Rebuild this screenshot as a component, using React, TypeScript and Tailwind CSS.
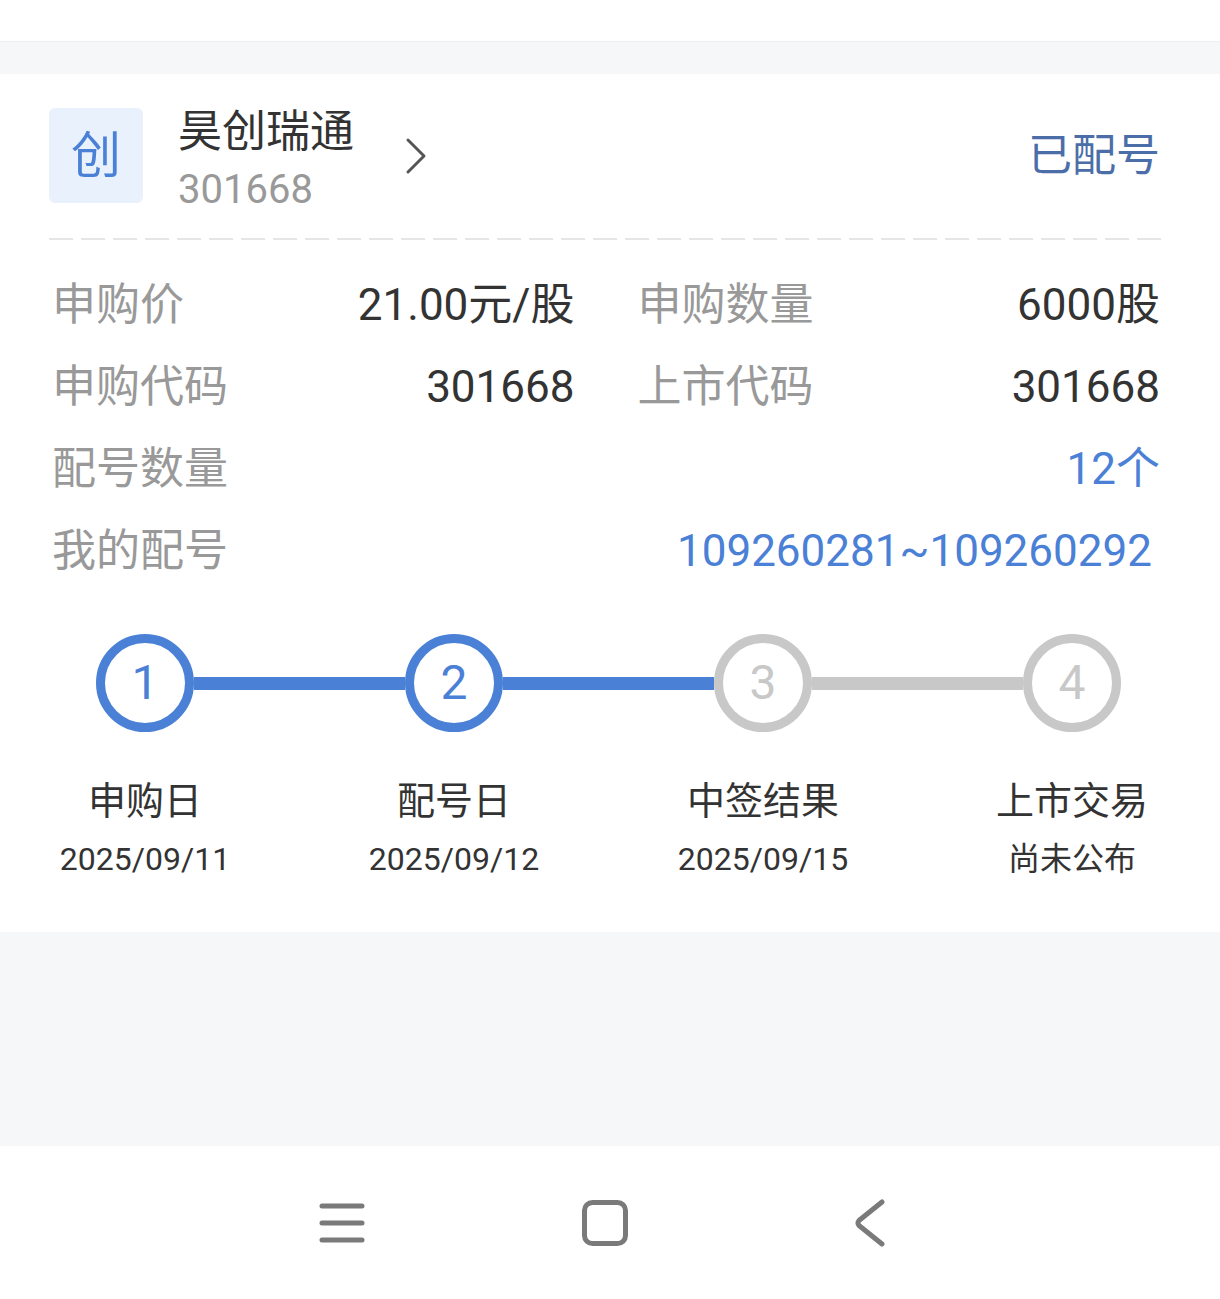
import React from 'react'

const FONT = { fontFamily: 'Roboto, "Noto Sans CJK SC", sans-serif' }

const BLUE = '#4a80d6'

const INFO_PAIRS = [
  [
    { label: '申购价', value: '21.00元/股' },
    { label: '申购数量', value: '6000股' },
  ],
  [
    { label: '申购代码', value: '301668' },
    { label: '上市代码', value: '301668' },
  ],
]

const STEPS = [
  { n: 1, title: '申购日', date: '2025/09/11', done: true },
  { n: 2, title: '配号日', date: '2025/09/12', done: true },
  { n: 3, title: '中签结果', date: '2025/09/15', done: false },
  { n: 4, title: '上市交易', date: '尚未公布', done: false },
]

const Chevron = () => (
  <svg width="24" height="38" viewBox="0 0 24 38" fill="none">
    <path d="M4 3 L20 19 L4 35" stroke="#555" strokeWidth="3" strokeLinecap="round" strokeLinejoin="round" />
  </svg>
)

const NavMenu = () => (
  <svg width="48" height="44" viewBox="0 0 48 44" fill="none">
    <path d="M4 5 H44 M4 22 H44 M4 39 H44" stroke="#7a7a7a" strokeWidth="5" strokeLinecap="round" />
  </svg>
)

const NavHome = () => (
  <svg width="48" height="48" viewBox="0 0 48 48" fill="none">
    <rect x="3.5" y="3.5" width="41" height="41" rx="8" stroke="#7a7a7a" strokeWidth="5" />
  </svg>
)

const NavBack = () => (
  <svg width="34" height="48" viewBox="0 0 34 48" fill="none">
    <path d="M29 3 L6 21.5 Q4 24 6 26.5 L29 45" stroke="#7a7a7a" strokeWidth="5" strokeLinecap="round" strokeLinejoin="round" />
  </svg>
)

export default function App() {
  return (
    <div className="w-[1220px] h-[1299px] flex flex-col bg-[#f6f7f9]" style={FONT}>

      {/* top bar */}
      <div className="h-[42px] bg-white border-b border-[#eeeff1]" />
      <div className="h-[32px]" />

      {/* card */}
      <div className="bg-white pt-[34px] h-[858px]">

        {/* header */}
        <div className="h-[95px] flex items-center pl-[49px] pr-[60px]">
          <div className="w-[94px] h-[95px] rounded-[6px] bg-[#e9f1fc] flex items-center justify-center text-[50px] leading-none" style={{ color: BLUE }}>
            创
          </div>
          <div className="ml-[35px] flex flex-col self-start -mt-[1px]">
            <span className="text-[44px] leading-[50px] text-[#333]">昊创瑞通</span>
            <span className="mt-[8px] text-[40px] leading-[50px] text-[#999]">301668</span>
          </div>
          <div className="ml-[50px]">
            <Chevron />
          </div>
          <span className="ml-auto text-[44px] leading-none text-[#4b6ea8]">已配号</span>
        </div>

        {/* dashed divider */}
        <div className="mt-[35px] ml-[49px] mr-[57px] h-[2px] bg-[repeating-linear-gradient(to_right,#e6e6e6_0_24px,transparent_24px_32px)]" />

        {/* info */}
        <div className="mt-[24px] pl-[52px] pr-[60px] flex flex-col">
          {INFO_PAIRS.map((pair, i) => (
            <div key={i} className="grid grid-cols-2 gap-x-[63px] h-[82px] items-center">
              {pair.map((cell) => (
                <div key={cell.label} className="flex items-center justify-between">
                  <span className="text-[44px] text-[#999]">{cell.label}</span>
                  <span className="text-[44px] text-[#333]">{cell.value}</span>
                </div>
              ))}
            </div>
          ))}
          <div className="flex items-center justify-between h-[82px]">
            <span className="text-[44px] text-[#999]">配号数量</span>
            <span className="text-[44px]" style={{ color: BLUE }}>12个</span>
          </div>
          <div className="flex items-center justify-between h-[82px] pr-[8px]">
            <span className="text-[44px] text-[#999]">我的配号</span>
            <span className="text-[44px]" style={{ color: BLUE }}>109260281~109260292</span>
          </div>
        </div>

        {/* steps */}
        <div className="mt-[42px] ml-[96px] mr-[99px] flex items-center">
          {STEPS.map((s, i) => (
            <React.Fragment key={s.n}>
              {i > 0 && (
                <div className={`flex-1 h-[13px] ${STEPS[i - 1].done && (s.done || i === 2) ? 'bg-[#4a80d6]' : 'bg-[#c8c8c8]'}`} />
              )}
              <div
                className={`w-[98px] h-[98px] rounded-full border-[9px] flex items-center justify-center text-[48px] leading-none bg-white ${
                  s.done ? 'border-[#4a80d6] text-[#4a80d6]' : 'border-[#c8c8c8] text-[#c8c8c8]'
                }`}
              >
                {s.n}
              </div>
            </React.Fragment>
          ))}
        </div>

        <div className="mt-[46px] pl-[45px] pr-[48px] flex justify-between">
          {STEPS.map((s) => (
            <div key={s.n} className="w-[200px] flex flex-col items-center">
              <span className="text-[38px] leading-[46px] text-[#333]">{s.title}</span>
              <span className="mt-[15px] text-[32px] leading-[40px] text-[#333]">{s.date}</span>
            </div>
          ))}
        </div>
      </div>

      {/* empty area */}
      <div className="flex-1" />

      {/* system nav */}
      <div className="h-[153px] bg-white flex items-center pl-[318px]">
        <NavMenu />
        <div className="ml-[215px]">
          <NavHome />
        </div>
        <div className="ml-[224px]">
          <NavBack />
        </div>
      </div>
    </div>
  )
}
